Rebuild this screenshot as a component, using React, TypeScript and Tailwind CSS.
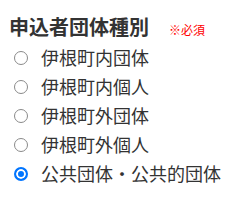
const options = ["伊根町内団体", "伊根町内個人", "伊根町外団体", "伊根町外個人", "公共団体・公共的団体"];

export default function App() {
  return (
    <div className="w-[234px] h-[202px] bg-white text-[#333] pt-[12px] pl-[9px]" style={{ fontFamily: '"Noto Sans CJK JP", "Noto Sans", sans-serif' }}>
      <div className="flex items-baseline">
        <h2 className="text-[20px] font-bold leading-[30px]">申込者団体種別</h2>
        <span className="ml-[20px] text-[12px] text-[#ff0000]">※必須</span>
      </div>
      <div className="flex flex-col mt-[1px]">
        {options.map((o, i) => (
          <label key={o} className="flex items-center h-[29px]">
            <span
              className={
                i === 4
                  ? "shrink-0 ml-[5px] w-[14px] h-[14px] rounded-full border-[2px] border-[#0075ff] bg-[#0075ff] shadow-[inset_0_0_0_2px_white]"
                  : "shrink-0 ml-[5px] w-[14px] h-[14px] rounded-full border border-[#8a8a8a] bg-white"
              }
            />
            <span className="ml-[13px] text-[18px] leading-[29px] whitespace-nowrap">{o}</span>
          </label>
        ))}
      </div>
    </div>
  );
}
